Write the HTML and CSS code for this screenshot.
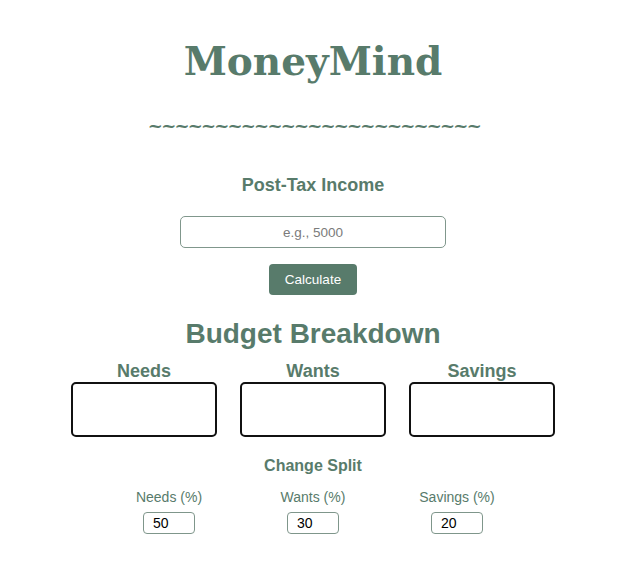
FILE: index.html
```html
<!DOCTYPE html>
<html lang="en">
<head>
<meta charset="utf-8">
<title>MoneyMind</title>
<link rel="stylesheet" href="styles.css">
</head>
<body>
<main class="app">
  <h1 class="title">MoneyMind</h1>
  <div class="squiggle">~~~~~~~~~~~~~~~~~~~~~~~~~</div>

  <h3 class="income-label">Post-Tax Income</h3>
  <input class="income-input" type="text" placeholder="e.g., 5000">
  <button class="calc-btn" type="button">Calculate</button>

  <h2 class="breakdown-title">Budget Breakdown</h2>
  <div class="breakdown">
    <div class="cat">
      <div class="cat-name">Needs</div>
      <div class="cat-box"></div>
    </div>
    <div class="cat">
      <div class="cat-name">Wants</div>
      <div class="cat-box"></div>
    </div>
    <div class="cat">
      <div class="cat-name">Savings</div>
      <div class="cat-box"></div>
    </div>
  </div>

  <h4 class="split-title">Change Split</h4>
  <div class="split">
    <label class="split-item">
      <span class="split-label">Needs (%)</span>
      <input class="split-input" type="text" value="50">
    </label>
    <label class="split-item">
      <span class="split-label">Wants (%)</span>
      <input class="split-input" type="text" value="30">
    </label>
    <label class="split-item">
      <span class="split-label">Savings (%)</span>
      <input class="split-input" type="text" value="20">
    </label>
  </div>
</main>
</body>
</html>
```

FILE: styles.css
```css
* { box-sizing: border-box; }

html, body {
  margin: 0;
  padding: 0;
  background: #ffffff;
}

.app {
  width: 626px;
  display: flex;
  flex-direction: column;
  align-items: center;
  font-family: "Liberation Sans", Arial, sans-serif;
  color: #587b6b;
}

.title {
  margin: 38px 0 0;
  font-family: "DejaVu Serif", Georgia, serif;
  font-weight: bold;
  font-size: 39px;
  line-height: 47px;
  color: #587b6b;
}

.squiggle {
  margin-top: 30px;
  font-family: "DejaVu Serif", Georgia, serif;
  font-weight: bold;
  font-size: 18px;
  line-height: 22px;
  letter-spacing: -1.8px;
  padding-left: 1.8px;
  color: #587b6b;
  white-space: nowrap;
}

.income-label {
  margin: 37px 0 0;
  font-size: 18px;
  line-height: 22px;
  font-weight: bold;
}

.income-input {
  margin-top: 20px;
  width: 266px;
  height: 32px;
  border: 1px solid #80978c;
  border-radius: 5px;
  font-family: "Liberation Sans", Arial, sans-serif;
  font-size: 13.5px;
  text-align: center;
  color: #333;
  background: #fff;
  outline: none;
}

.income-input::placeholder {
  color: #7b7b7b;
}

.calc-btn {
  margin-top: 16px;
  width: 88px;
  height: 31px;
  border: none;
  border-radius: 4px;
  background: #587b6b;
  color: #ffffff;
  font-family: "Liberation Sans", Arial, sans-serif;
  font-size: 13.5px;
  padding: 0;
}

.breakdown-title {
  margin: 23px 0 0;
  font-size: 28px;
  line-height: 32px;
  font-weight: bold;
}

.breakdown {
  margin-top: 10px;
  display: grid;
  grid-template-columns: repeat(3, 146px);
  column-gap: 23px;
}

.cat {
  display: flex;
  flex-direction: column;
  align-items: center;
}

.cat-name {
  font-size: 18px;
  line-height: 22px;
  font-weight: bold;
}

.cat-box {
  width: 146px;
  height: 55px;
  border: 2px solid #111111;
  border-radius: 5px;
}

.split-title {
  margin: 19px 0 0;
  font-size: 16px;
  line-height: 20px;
  font-weight: bold;
}

.split {
  margin-top: 12px;
  display: grid;
  grid-template-columns: repeat(3, 120px);
  column-gap: 24px;
}

.split-item {
  display: flex;
  flex-direction: column;
  align-items: center;
  gap: 6px;
}

.split-label {
  font-size: 14px;
  line-height: 18px;
  color: #587b6b;
}

.split-input {
  width: 52px;
  height: 22px;
  border: 1px solid #7f968b;
  border-radius: 4px;
  padding: 0 0 0 9px;
  font-family: "Liberation Sans", Arial, sans-serif;
  font-size: 14px;
  color: #000;
  background: #fff;
  outline: none;
}
```
